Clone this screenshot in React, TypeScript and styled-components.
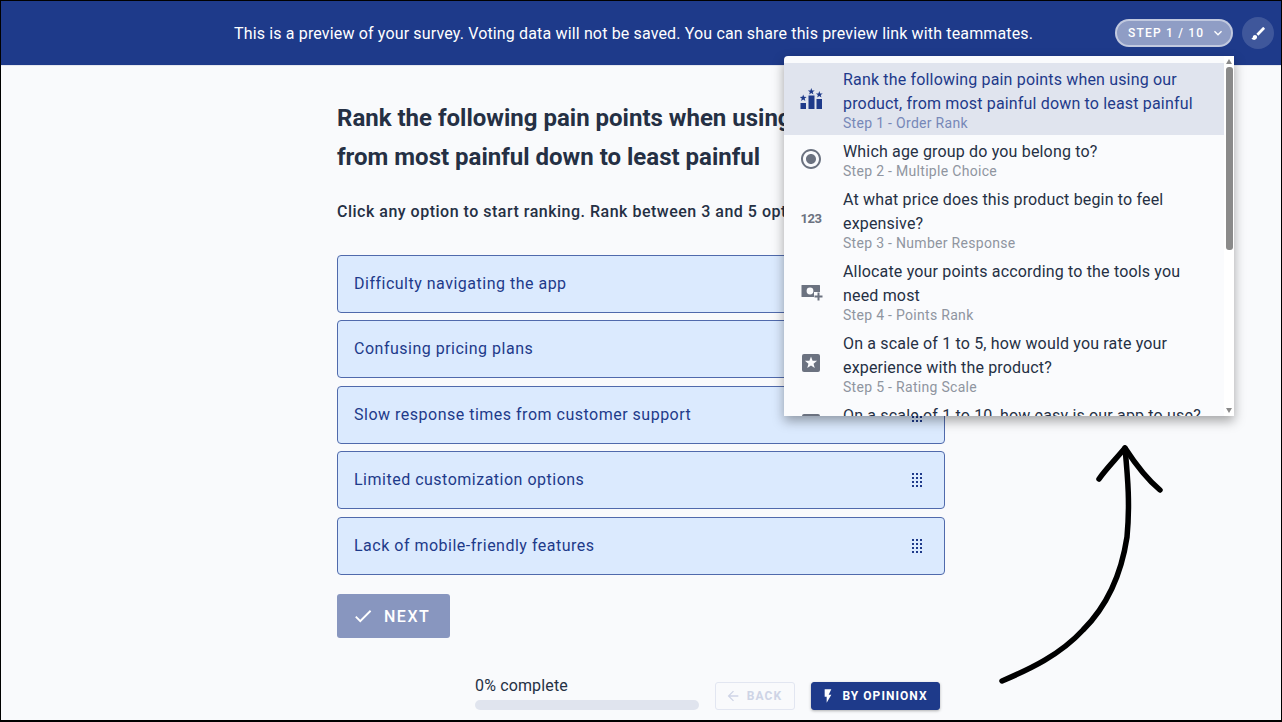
import React from "react";
import styled, { createGlobalStyle } from "styled-components";

const GlobalStyle = createGlobalStyle`
  html, body {
    margin: 0;
    padding: 0;
    background: #fff;
  }
  * {
    box-sizing: border-box;
  }
`;

const Frame = styled.div`
  position: relative;
  width: 1282px;
  height: 722px;
  border: 1px solid #000;
  border-bottom-width: 2px;
  overflow: hidden;
  background: #f9fafc;
  font-family: Roboto, "Liberation Sans", sans-serif;
  color: #253044;
`;

const Banner = styled.header`
  display: flex;
  align-items: center;
  height: 64px;
  padding: 0 7px 0 233px;
  background: #1e3a8a;
  box-shadow: 0 1px 0 #e5e7ef;
`;

const BannerText = styled.div`
  font-size: 16px;
  letter-spacing: 0.15px;
  color: #fff;
`;

const BannerActions = styled.div`
  display: flex;
  align-items: center;
  gap: 9px;
  margin-left: auto;
`;

const StepPill = styled.button`
  display: flex;
  align-items: center;
  gap: 6px;
  height: 28px;
  width: 118px;
  padding: 0 0 0 11px;
  border: 2px solid rgba(255, 255, 255, 0.45);
  border-radius: 14px;
  background: rgba(255, 255, 255, 0.5);
  color: #fff;
  font: 500 12px Roboto, sans-serif;
  letter-spacing: 1.2px;
  white-space: nowrap;
`;

const RoundButton = styled.button`
  display: flex;
  align-items: center;
  justify-content: center;
  width: 32px;
  height: 32px;
  padding: 0;
  border: 0;
  border-radius: 50%;
  background: rgba(255, 255, 255, 0.15);
`;

const Main = styled.main`
  width: 608px;
  margin: 0 auto;
  padding-top: 34px;
  margin-left: 336px;
`;

const Title = styled.h1`
  margin: 0;
  width: 600px;
  font-size: 24px;
  font-weight: 700;
  line-height: 39px;
`;

const Hint = styled.p`
  margin: 23px 0 0;
  font-size: 16px;
  font-weight: 500;
  line-height: 24px;
  letter-spacing: 0.5px;
  white-space: nowrap;
`;

const OptionList = styled.div`
  display: flex;
  flex-direction: column;
  gap: 7.4px;
  margin-top: 31px;
`;

const Option = styled.div`
  display: flex;
  align-items: center;
  justify-content: space-between;
  height: 58px;
  padding: 0 21px 1px 16px;
  border: 1px solid #506aac;
  border-radius: 4px;
  background: #dbeafe;
  color: #1e3a8a;
  font-size: 16px;
  letter-spacing: 0.5px;
`;

const NextButton = styled.button`
  display: flex;
  align-items: center;
  gap: 10px;
  width: 113px;
  height: 44px;
  margin-top: 19px;
  padding: 1px 0 0 15px;
  border: 0;
  border-radius: 3px;
  background: #8896bf;
  color: #fff;
  font: 500 16px Roboto, sans-serif;
  letter-spacing: 1.5px;
`;

const Footer = styled.footer`
  display: flex;
  align-items: flex-end;
  width: 465px;
  margin-left: 138px;
  margin-top: 35px;
`;

const ProgressBlock = styled.div`
  width: 224px;
`;

const ProgressLabel = styled.div`
  padding-top: 1px;
  font-size: 16px;
  line-height: 24px;
  letter-spacing: 0.15px;
`;

const ProgressTrack = styled.div`
  height: 10px;
  margin-top: 2px;
  border-radius: 5px;
  background: #e0e4ee;
`;

const SmallButton = styled.button<{ $primary?: boolean }>`
  display: flex;
  align-items: center;
  justify-content: center;
  gap: 6px;
  height: 28px;
  width: ${(p) => (p.$primary ? "129px" : "80px")};
  margin-left: 16px;
  padding: 0 3px 0 0;
  border: 1px solid ${(p) => (p.$primary ? "#1e3a8a" : "#e2e6f1")};
  border-radius: 3px;
  background: ${(p) => (p.$primary ? "#1e3a8a" : "transparent")};
  color: ${(p) => (p.$primary ? "#fff" : "#ced4e6")};
  font: 700 12px Roboto, sans-serif;
  letter-spacing: 1.05px;
  box-shadow: ${(p) => (p.$primary ? "0 1px 3px rgba(0,0,0,.3)" : "none")};
`;

const MenuPanel = styled.div`
  position: absolute;
  left: 783px;
  top: 55px;
  display: flex;
  width: 450px;
  height: 360px;
  border-radius: 4px 0 0 0;
  background: #fafbfd;
  box-shadow: 0 5px 12px rgba(0, 0, 0, 0.35);
  overflow: hidden;
`;

const MenuList = styled.div`
  flex: 1;
  padding-top: 7px;
  overflow: hidden;
`;

const MenuItem = styled.div<{ $active?: boolean }>`
  display: flex;
  align-items: center;
  padding: 5px 8px 4px 0;
  background: ${(p) => (p.$active ? "#e0e4ee" : "transparent")};
  color: ${(p) => (p.$active ? "#1e3a8a" : "#253044")};
`;

const MenuIcon = styled.div`
  display: flex;
  align-items: center;
  justify-content: center;
  flex: none;
  width: 54px;
  height: 24px;
  margin: 0 5px 2px 0;
`;

const NumberGlyph = styled.span`
  font-size: 13px;
  font-weight: 700;
  letter-spacing: -0.4px;
  color: #6b7280;
`;

const MenuText = styled.div`
  font-size: 16px;
  line-height: 24px;
  letter-spacing: 0.17px;
`;

const MenuSub = styled.div<{ $active?: boolean }>`
  margin-top: -1px;
  font-size: 14px;
  line-height: 16px;
  letter-spacing: 0.3px;
  color: ${(p) => (p.$active ? "#7788b8" : "#8f95a0")};
`;

const ScrollRail = styled.div`
  display: flex;
  flex-direction: column;
  align-items: center;
  flex: none;
  width: 10px;
  padding-top: 3px;
  background: #fff;
`;

const ScrollArrow = styled.div<{ $down?: boolean }>`
  flex: none;
  width: 0;
  height: 0;
  border-left: 3.5px solid transparent;
  border-right: 3.5px solid transparent;
  ${(p) =>
    p.$down
      ? "border-top: 5px solid #8a8a8a; margin-top: auto; margin-bottom: 3px;"
      : "border-bottom: 5px solid #8a8a8a;"}
`;

const ScrollThumb = styled.div`
  width: 7px;
  height: 183px;
  margin-top: 3px;
  border-radius: 3px;
  background: #8a8a8a;
`;

const ArrowDoodle = styled.svg`
  position: absolute;
  left: 0;
  top: 0;
  pointer-events: none;
`;

const Icon = ({ d, size = 24, color = "currentColor" }: { d: string; size?: number; color?: string }) => (
  <svg width={size} height={size} viewBox="0 0 24 24" fill={color}>
    <path d={d} />
  </svg>
);

const star = (cx: number, cy: number, r: number) => {
  const pts: string[] = [];
  for (let i = 0; i < 10; i++) {
    const rad = i % 2 === 0 ? r : r * 0.42;
    const a = -Math.PI / 2 + (i * Math.PI) / 5;
    pts.push(`${(cx + rad * Math.cos(a)).toFixed(2)},${(cy + rad * Math.sin(a)).toFixed(2)}`);
  }
  return pts.join(" ");
};

const RankIcon = () => (
  <svg width="24" height="24" viewBox="0 0 24 24" fill="#1e3a8a">
    <rect x="1.5" y="16" width="5.5" height="6" />
    <rect x="9.5" y="8.5" width="6" height="13.5" />
    <rect x="17.5" y="12" width="5.5" height="10" />
    <polygon points={star(4.2, 11, 3.6)} />
    <polygon points={star(12.3, 4.6, 3.6)} />
    <polygon points={star(20.3, 7.6, 3.6)} />
  </svg>
);

const MoneyIcon = () => (
  <svg width="24" height="24" viewBox="0 0 24 24">
    <rect x="2.5" y="6" width="18.5" height="12" rx="0.5" fill="#6b7280" />
    <circle cx="11" cy="12" r="3.4" fill="#fafbfd" />
    <rect x="15" y="13" width="9" height="9" fill="#fafbfd" />
    <path fill="#6b7280" d="M18.5 13.5h2v3h3v2h-3v3h-2v-3h-3v-2h3z" />
  </svg>
);

const StarBoxIcon = () => (
  <svg width="24" height="24" viewBox="0 0 24 24">
    <rect x="3" y="3" width="18" height="18" rx="2" fill="#6b7280" />
    <polygon points={star(12, 11.8, 6.4)} fill="#fafbfd" />
  </svg>
);

const DragHandle = () => (
  <svg width="12" height="15" viewBox="0 0 12 15" fill="#1e3a8a">
    {[0, 1, 2, 3].map((r) =>
      [0, 1, 2].map((c) => <rect key={`${r}-${c}`} x={1 + c * 4} y={1 + r * 4} width="2" height="2" />)
    )}
  </svg>
);

const paths = {
  brush:
    "M7 14c-1.66 0-3 1.34-3 3 0 1.31-1.16 2-2 2 .92 1.22 2.49 2 4 2 2.21 0 4-1.79 4-4 0-1.66-1.34-3-3-3zm13.71-9.37l-1.34-1.34a.9959.9959 0 0 0-1.41 0L9 12.25 11.75 15l8.96-8.96c.39-.39.39-1.02 0-1.41z",
  chevron: "M16.59 8.59L12 13.17 7.41 8.59 6 10l6 6 6-6z",
  check: "M9 16.17L4.83 12l-1.42 1.41L9 19 21 7l-1.41-1.41z",
  back: "M20 11H7.83l5.59-5.59L12 4l-8 8 8 8 1.41-1.41L7.83 13H20v-2z",
  bolt: "M7 2v11h3v9l7-12h-4l4-8z",
  radio:
    "M12 7c-2.76 0-5 2.24-5 5s2.24 5 5 5 5-2.24 5-5-2.24-5-5-5zm0-5C6.48 2 2 6.48 2 12s4.48 10 10 10 10-4.48 10-10S17.52 2 12 2zm0 18c-4.42 0-8-3.58-8-8s3.58-8 8-8 8 3.58 8 8-3.58 8-8 8z",
};

const options = [
  "Difficulty navigating the app",
  "Confusing pricing plans",
  "Slow response times from customer support",
  "Limited customization options",
  "Lack of mobile-friendly features",
];

const steps = [
  {
    icon: <RankIcon />,
    title: "Rank the following pain points when using our product, from most painful down to least painful",
    sub: "Step 1 - Order Rank",
  },
  {
    icon: <Icon d={paths.radio} color="#6b7280" />,
    title: "Which age group do you belong to?",
    sub: "Step 2 - Multiple Choice",
  },
  {
    icon: <NumberGlyph>123</NumberGlyph>,
    title: "At what price does this product begin to feel expensive?",
    sub: "Step 3 - Number Response",
  },
  {
    icon: <MoneyIcon />,
    title: "Allocate your points according to the tools you need most",
    sub: "Step 4 - Points Rank",
  },
  {
    icon: <StarBoxIcon />,
    title: "On a scale of 1 to 5, how would you rate your experience with the product?",
    sub: "Step 5 - Rating Scale",
  },
  {
    icon: <StarBoxIcon />,
    title: "On a scale of 1 to 10, how easy is our app to use?",
    sub: "Step 6 - Rating Scale",
  },
];

export default function App() {
  return (
    <Frame>
      <GlobalStyle />
      <Banner>
        <BannerText>
          This is a preview of your survey. Voting data will not be saved. You can share this preview link with
          teammates.
        </BannerText>
        <BannerActions>
          <StepPill>
            STEP 1 / 10
            <Icon d={paths.chevron} size={16} color="#fff" />
          </StepPill>
          <RoundButton>
            <Icon d={paths.brush} size={17} color="#fff" />
          </RoundButton>
        </BannerActions>
      </Banner>

      <Main>
        <Title>Rank the following pain points when using our product, from most painful down to least painful</Title>
        <Hint>Click any option to start ranking. Rank between 3 and 5 options.</Hint>
        <OptionList>
          {options.map((o) => (
            <Option key={o}>
              {o}
              <DragHandle />
            </Option>
          ))}
        </OptionList>
        <NextButton>
          <Icon d={paths.check} size={22} color="#fff" />
          NEXT
        </NextButton>
        <Footer>
          <ProgressBlock>
            <ProgressLabel>0% complete</ProgressLabel>
            <ProgressTrack />
          </ProgressBlock>
          <SmallButton>
            <Icon d={paths.back} size={16} color="#ced4e6" />
            BACK
          </SmallButton>
          <SmallButton $primary>
            <Icon d={paths.bolt} size={16} color="#fff" />
            BY OPINIONX
          </SmallButton>
        </Footer>
      </Main>

      <MenuPanel>
        <MenuList>
          {steps.map((s, i) => (
            <MenuItem key={s.sub} $active={i === 0}>
              <MenuIcon>{s.icon}</MenuIcon>
              <div>
                <MenuText>{s.title}</MenuText>
                <MenuSub $active={i === 0}>{s.sub}</MenuSub>
              </div>
            </MenuItem>
          ))}
        </MenuList>
        <ScrollRail>
          <ScrollArrow />
          <ScrollThumb />
          <ScrollArrow $down />
        </ScrollRail>
      </MenuPanel>

      <ArrowDoodle width="1282" height="722" viewBox="1 1 1282 722" fill="none" stroke="#000" strokeWidth="5.5" strokeLinecap="round" strokeLinejoin="round">
        <path d="M1002 681C1030 669 1060 655 1083 630C1110 603 1122 570 1127 537C1130 505 1128 480 1125 448" />
        <path d="M1099 479C1105 470 1115 460 1125 448C1136 465 1148 480 1160 490" />
      </ArrowDoodle>
    </Frame>
  );
}
